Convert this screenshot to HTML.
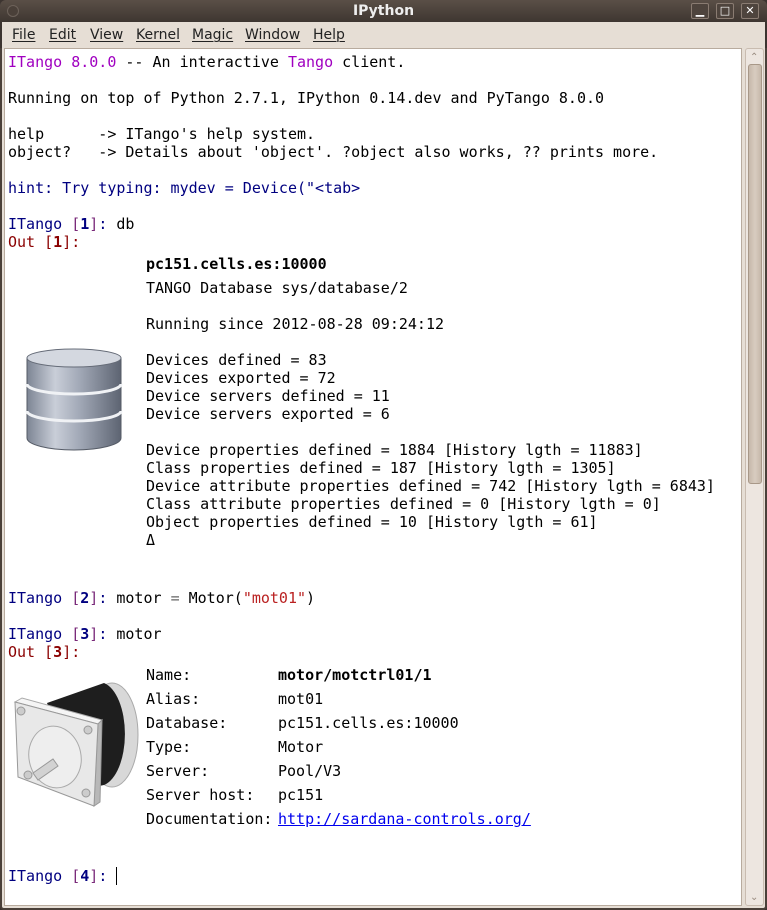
<!DOCTYPE html>
<html><head><style>
*{margin:0;padding:0;box-sizing:border-box}
body{width:767px;height:910px;overflow:hidden;background:#3c3430;font-family:"DejaVu Sans Mono","Liberation Mono",monospace;font-size:15px;position:relative}
.title{position:absolute;left:0;top:0;width:767px;height:22px;background:linear-gradient(#5a4f47,#3e3631);border-radius:6px 6px 0 0;color:#eee;font:bold 14px "DejaVu Sans","Liberation Sans",sans-serif;text-align:center;line-height:22px}
.menu{position:absolute;left:0;top:22px;width:767px;height:26px;background:#e6ded5;font:14px "DejaVu Sans","Liberation Sans",sans-serif;color:#222;border-left:2px solid #3c3430;border-right:2px solid #3c3430}
.menu span{position:absolute;top:5px;text-decoration:underline;text-decoration-thickness:1px;text-underline-offset:2px}
.frame{position:absolute;left:0;top:48px;width:767px;height:862px;background:#e6ded5;border-left:2px solid #4a4039;border-right:2px solid #4a4039;border-bottom:2px solid #4a4039;border-radius:0 0 4px 4px}
.text{position:absolute;left:4px;top:48px;width:738px;height:858px;background:#fff;border:1px solid #b8ab9e}
.sb{position:absolute;left:745px;top:48px;width:19px;height:858px;background:#ede6e0;border:1px solid #c9bcb0;border-radius:3px}
.thumb{position:absolute;left:748px;top:64px;width:14px;height:420px;background:linear-gradient(90deg,#c6b8aa,#d8ccc0,#c6b8aa);border:1px solid #a89888;border-radius:3px}
.l{position:absolute;white-space:pre;line-height:18px;color:#000}
.p{color:#000080}.b{font-weight:bold}.o{color:#8b0000}.pu{color:#a000c0}.br{color:#7a2a7a}
.btn{position:absolute;top:3px;width:18px;height:16px;border:1px solid #8a7c72;border-radius:2px;background:#4e443d;color:#fff;font:bold 11px "DejaVu Sans",sans-serif;text-align:center;line-height:14px}
</style></head><body>
<div class="title">IPython</div>
<div style="position:absolute;left:7px;top:5px;width:12px;height:12px;border-radius:6px;border:1px solid #6d625a;background:#4a4039"></div>
<div class="btn" style="left:691px">&#9601;</div>
<div class="btn" style="left:716px">&#9633;</div>
<div class="btn" style="left:741px">&#10005;</div>
<div class="menu">
<span style="left:10px">File</span><span style="left:47px">Edit</span><span style="left:88px">View</span><span style="left:134px">Kernel</span><span style="left:190px">Magic</span><span style="left:243px">Window</span><span style="left:311px">Help</span>
</div>
<div class="frame"></div>
<div class="text"></div>
<div class="sb"></div>
<div style="position:absolute;left:750px;top:52px;font:10px sans-serif;color:#9a8c80">&#8963;</div>
<div class="thumb"></div>
<div style="position:absolute;left:750px;top:892px;font:10px sans-serif;color:#9a8c80">&#8964;</div>

<div class="l" style="left:8px;top:53px"><span class="pu">ITango 8.0.0</span> -- An interactive <span class="pu">Tango</span> client.</div>
<div class="l" style="left:8px;top:89px">Running on top of Python 2.7.1, IPython 0.14.dev and PyTango 8.0.0</div>
<div class="l" style="left:8px;top:125px">help      -> ITango's help system.</div>
<div class="l" style="left:8px;top:143px">object?   -> Details about 'object'. ?object also works, ?? prints more.</div>
<div class="l p" style="left:8px;top:179px">hint: Try typing: mydev = Device("&lt;tab&gt;</div>
<div class="l" style="left:8px;top:215px"><span class="p">ITango <span class="br">[</span><b>1</b><span class="br">]</span>: </span>db</div>
<div class="l o" style="left:8px;top:233px">Out [<b>1</b>]:</div>

<svg style="position:absolute;left:24px;top:348px" width="100" height="104" viewBox="0 0 100 104">
<defs><linearGradient id="g" x1="0" x2="1"><stop offset="0" stop-color="#7d8594"/><stop offset=".3" stop-color="#c9ced8"/><stop offset=".55" stop-color="#a3aab8"/><stop offset="1" stop-color="#5d6472"/></linearGradient></defs>
<path d="M3 10 V90 A47 12 0 0 0 97 90 V10 Z" fill="url(#g)" stroke="#555b66"/>
<ellipse cx="50" cy="10" rx="47" ry="9" fill="#d4d8e0" stroke="#666c78"/>
<path d="M3 36 A47 10 0 0 0 97 36" fill="none" stroke="#f0f2f5" stroke-width="3"/>
<path d="M3 63 A47 10 0 0 0 97 63" fill="none" stroke="#f0f2f5" stroke-width="3"/>
</svg>

<div class="l b" style="left:146px;top:255px">pc151.cells.es:10000</div>
<div class="l" style="left:146px;top:279px">TANGO Database sys/database/2</div>
<div class="l" style="left:146px;top:315px">Running since 2012-08-28 09:24:12</div>
<div class="l" style="left:146px;top:351px">Devices defined = 83
Devices exported = 72
Device servers defined = 11
Device servers exported = 6

Device properties defined = 1884 [History lgth = 11883]
Class properties defined = 187 [History lgth = 1305]
Device attribute properties defined = 742 [History lgth = 6843]
Class attribute properties defined = 0 [History lgth = 0]
Object properties defined = 10 [History lgth = 61]
&#916;</div>

<div class="l" style="left:8px;top:589px"><span class="p">ITango <span class="br">[</span><b>2</b><span class="br">]</span>: </span>motor <span style="color:#666">=</span> Motor(<span style="color:#ba2121">"mot01"</span>)</div>
<div class="l" style="left:8px;top:625px"><span class="p">ITango <span class="br">[</span><b>3</b><span class="br">]</span>: </span>motor</div>
<div class="l o" style="left:8px;top:643px">Out [<b>3</b>]:</div>

<svg style="position:absolute;left:0;top:660px" width="145" height="160" viewBox="0 0 145 160">
<ellipse cx="112" cy="75" rx="26" ry="52" fill="#d8d8d8" stroke="#aaa"/>
<path d="M47 43 L104 23 A26 52 0 0 1 104 125 L80 130 Z" fill="#1e1e1e"/>
<path d="M15 42 L22 38 L102 60 L98 64 Z" fill="#f5f5f5" stroke="#aaa"/>
<path d="M98 64 L102 60 L100 142 L94 146 Z" fill="#b8b8b8" stroke="#999"/>
<path d="M15 42 L98 64 L94 146 L18 117 Z" fill="#e8e8e8" stroke="#999"/>
<ellipse cx="55" cy="97" rx="26" ry="31" transform="rotate(-12 55 97)" fill="#eeeeee" stroke="#aaa"/>
<path d="M33 113 L53 99 L58 106 L38 120 Z" fill="#d2d2d2" stroke="#999"/>
<circle cx="21" cy="51" r="4" fill="#ccc" stroke="#999"/><circle cx="88" cy="70" r="4" fill="#ccc" stroke="#999"/>
<circle cx="28" cy="115" r="4" fill="#ccc" stroke="#999"/><circle cx="86" cy="133" r="4" fill="#ccc" stroke="#999"/>
</svg>

<div class="l" style="left:146px;top:663px;line-height:24px">Name:
Alias:
Database:
Type:
Server:
Server host:
Documentation:</div>
<div class="l" style="left:278px;top:663px;line-height:24px"><b>motor/motctrl01/1</b>
mot01
pc151.cells.es:10000
Motor
Pool/V3
pc151
<span style="color:#0000ee;text-decoration:underline">http://sardana-controls.org/</span></div>

<div class="l" style="left:8px;top:867px"><span class="p">ITango <span class="br">[</span><b>4</b><span class="br">]</span>: </span></div>
<div style="position:absolute;left:116px;top:867px;width:1px;height:18px;background:#000"></div>
</body></html>
